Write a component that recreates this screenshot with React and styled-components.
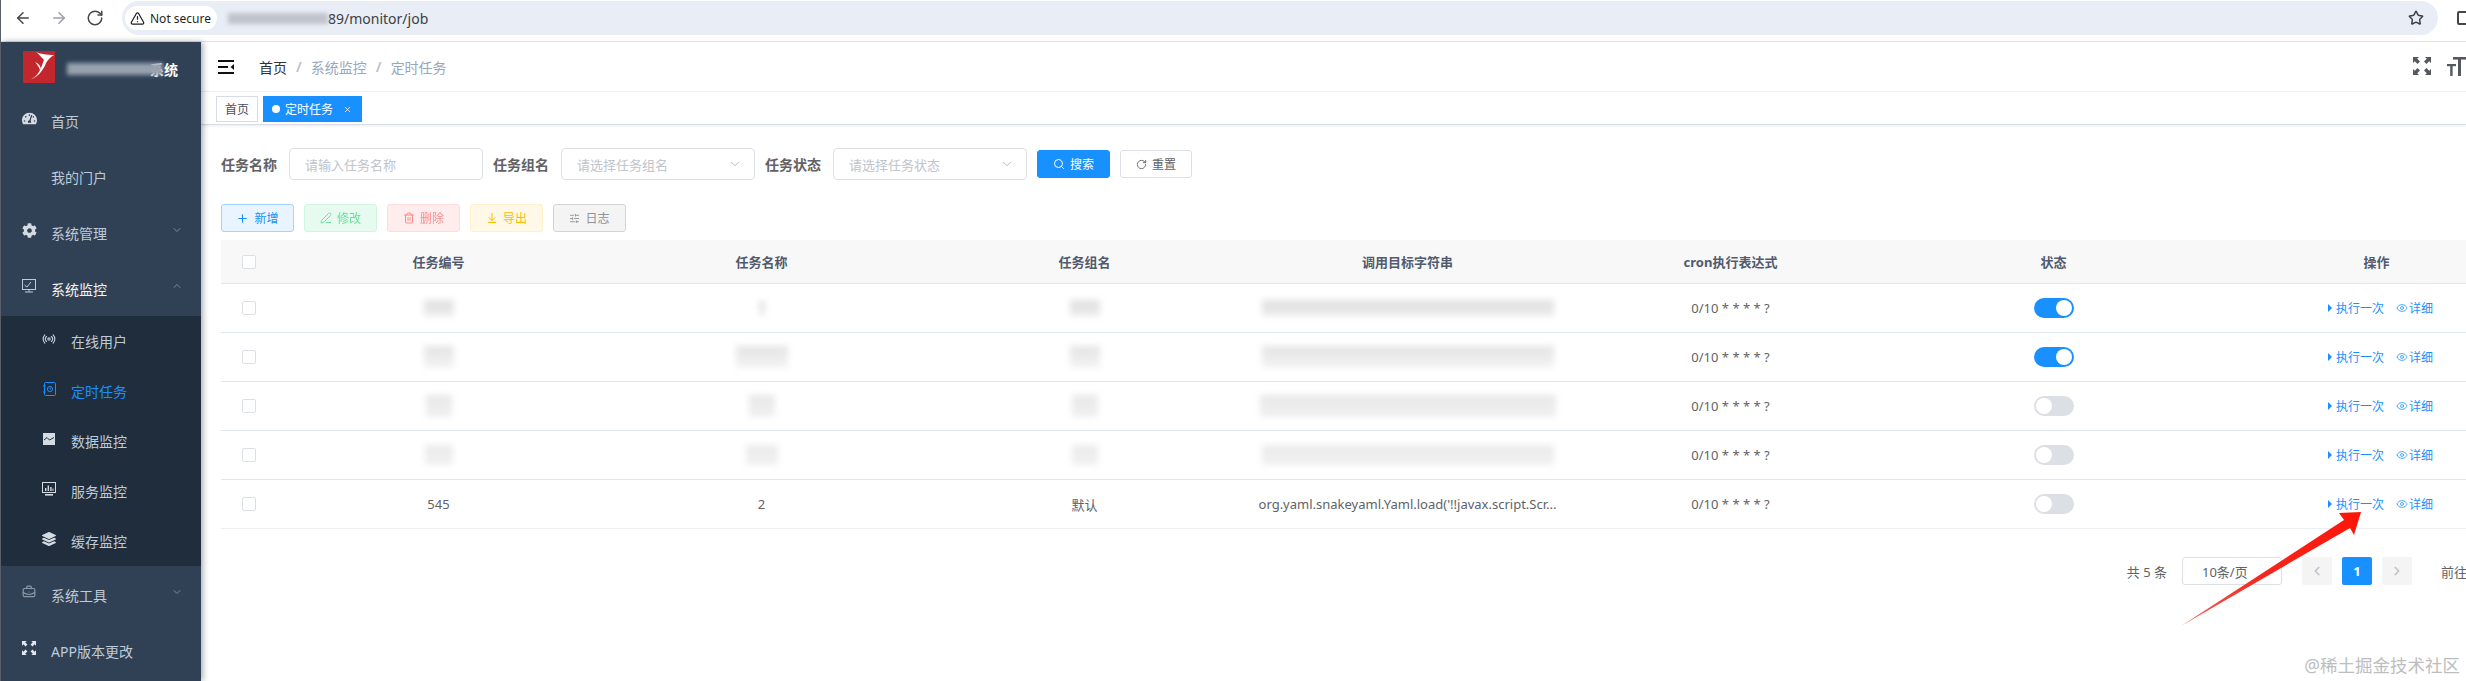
import React from 'react'
import styled, { createGlobalStyle } from 'styled-components'
import { ArrowLeft, ArrowRight, RotateCw, TriangleAlert, Star, Plus, Search, PenLine, Trash2, ArrowDownToLine, SlidersHorizontal, ChevronDown, ChevronUp, ChevronLeft, ChevronRight, Eye, Radio, BriefcaseBusiness, X } from 'lucide-react'
import { FaTachometerAlt, FaCog, FaLayerGroup } from 'react-icons/fa'

const GlobalStyle = createGlobalStyle`
  html, body {
    margin: 0;
    padding: 0;
    overflow: hidden;
    background: #fff;
  }
  * { box-sizing: border-box; }
`

const Page = styled.div`
  position: relative;
  width: 2466px;
  height: 681px;
  overflow: hidden;
  display: flex;
  flex-direction: column;
  border-left: 1px solid #5a5f6a;
  font-family: "Noto Sans", "Noto Sans CJK SC", sans-serif;
  color: #606266;
`

// browser chrome
const BrowserBar = styled.div`
  flex: none;
  height: 42px;
  display: flex;
  padding-top: 1px;
  border-bottom: 1px solid #dfe1e5;
  background: #fff;
`
const NavIcons = styled.div`
  flex: none;
  width: 121px;
  height: 34px;
  display: flex;
  align-items: center;
  gap: 18px;
  padding-left: 13px;
  color: #444746;
`
const AddressPill = styled.div`
  flex: none;
  width: 2316px;
  height: 34px;
  display: flex;
  align-items: center;
  padding: 0 14px 0 3px;
  border-radius: 17px;
  background: #e9edf6;
`
const SecureChip = styled.div`
  width: 92px;
  height: 24px;
  display: flex;
  align-items: center;
  gap: 5px;
  padding-left: 5px;
  border-radius: 12px;
  background: #fff;
  color: #1f1f1f;
  font-size: 12px;
`
const Url = styled.div`
  flex: 1;
  display: flex;
  align-items: center;
  padding-left: 11px;
  color: #3c4043;
  font-size: 14px;
`
const TabBox = styled.div`
  flex: none;
  width: 16px;
  height: 14px;
  margin: 10px 0 0 19px;
  border: 2px solid #444746;
  border-radius: 2px;
`

// mosaic that hides data in the shot
const Blur = styled.span`
  display: inline-block;
  width: ${p => p.$w}px;
  height: ${p => p.$h}px;
  background: ${p => p.$color || '#dcdcdc'};
  filter: blur(${p => p.$blur || 3}px);
`

const Body = styled.div`
  flex: 1;
  min-height: 0;
  display: flex;
`

// sidebar
const Sidebar = styled.aside`
  flex: none;
  width: 200px;
  background: #304156;
  box-shadow: 2px 0 6px rgba(0, 21, 41, 0.35);
  z-index: 2;
`
const Brand = styled.div`
  position: relative;
  height: 50px;
  display: flex;
  align-items: center;
  padding-left: 22px;
  gap: 11px;
`
const BrandName = styled.div`
  position: relative;
  width: 112px;
  padding-top: 4px;
  text-align: right;
  color: #fff;
  font-size: 14px;
  font-weight: 700;
`
const BrandCover = styled(Blur)`
  position: absolute;
  left: 1px;
  top: 8px;
`
const MenuRow = styled.div`
  height: 56px;
  display: flex;
  align-items: center;
  padding-left: 20px;
  color: ${p => (p.$open ? '#f4f4f5' : '#bfcbd9')};
  font-size: 14px;
`
const MenuIcon = styled.span`
  width: 16px;
  margin-right: 14px;
  display: flex;
  align-items: center;
  justify-content: center;
  margin-top: -4px;
`
const MenuLabel = styled.span`
  flex: 1;
  padding-top: 1px;
`
const MenuChevron = styled.span`
  display: flex;
  margin-right: 18px;
  margin-top: -4px;
  color: #7d8a9b;
`
const SubMenu = styled.div`
  background: #1f2d3d;
`
const SubRow = styled.div`
  height: 50px;
  display: flex;
  align-items: center;
  padding-left: 40px;
  color: ${p => (p.$active ? '#1890ff' : '#bfcbd9')};
  font-size: 14px;
`

// right side
const Main = styled.main`
  flex: 1;
  min-width: 0;
  overflow: hidden;
`
const Navbar = styled.div`
  height: 50px;
  display: flex;
  align-items: center;
  padding-left: 17px;
  border-bottom: 1px solid #f2f3f5;
`
const Hamburger = styled.span`
  display: flex;
  margin-right: 25px;
`
const Crumb = styled.span`
  font-size: 14px;
  color: ${p => (p.$home ? '#303133' : '#97a8be')};
`
const CrumbSep = styled.span`
  margin: 0 9px;
  color: #c0c4cc;
  font-size: 14px;
  font-weight: 700;
`
const NavTools = styled.div`
  margin-left: auto;
  display: flex;
  gap: 16px;
  color: #55585e;
`
const TagsBar = styled.div`
  height: 33px;
  display: flex;
  align-items: center;
  gap: 5px;
  padding: 2px 0 0 15px;
  border-bottom: 1px solid #d8dce5;
  box-shadow: 0 1px 3px rgba(0, 0, 0, 0.08);
`
const Tag = styled.div`
  height: 26px;
  display: flex;
  align-items: center;
  padding: 0 ${p => (p.$active ? 9 : 8)}px 0 8px;
  border: 1px solid ${p => (p.$active ? '#1890ff' : '#d8dce5')};
  background: ${p => (p.$active ? '#1890ff' : '#fff')};
  color: ${p => (p.$active ? '#fff' : '#495060')};
  font-size: 12px;
`
const TagDot = styled.span`
  width: 8px;
  height: 8px;
  margin-right: 5px;
  border-radius: 50%;
  background: #fff;
`
const TagClose = styled.span`
  display: flex;
  margin-left: 10px;
`
const Content = styled.div`
  width: 2337px;
  padding: 23px 0 0 20px;
`
const SearchForm = styled.div`
  height: 32px;
  display: flex;
  align-items: center;
`
const FieldLabel = styled.label`
  width: 68px;
  flex: none;
  color: #606266;
  font-size: 14px;
  font-weight: 700;
`
const FieldBox = styled.div`
  width: 194px;
  height: 32px;
  display: flex;
  align-items: center;
  justify-content: space-between;
  margin-right: 10px;
  padding: 0 12px 0 15px;
  border: 1px solid #dcdfe6;
  border-radius: 4px;
  color: #c0c4cc;
  font-size: 13px;
`
const SelectArrow = styled(ChevronDown)`
  color: #a8abb2;
`
const Button = styled.button`
  width: ${p => p.$w || 73}px;
  height: 28px;
  display: flex;
  align-items: center;
  justify-content: center;
  gap: 5px;
  margin-left: ${p => p.$gapLeft || 0}px;
  padding: 0;
  border: 1px solid ${p => p.$border};
  border-radius: 3px;
  background: ${p => p.$bg};
  color: ${p => p.$color};
  font-family: inherit;
  font-size: 12px;
`
const ButtonText = styled.span`
  display: flex;
  opacity: ${p => (p.$faded ? 0.6 : 1)};
`
const Toolbar = styled.div`
  display: flex;
  gap: 10px;
  margin-top: 24px;
`
const Table = styled.div`
  margin-top: 8px;
`
const Row = styled.div`
  display: grid;
  grid-template-columns: 56px repeat(7, 323px);
  height: ${p => (p.$head ? 44 : 49)}px;
  align-items: center;
  border-bottom: 1px solid ${p => (p.$last ? '#ebeef5' : '#dfe6ec')};
  background: ${p => (p.$head ? '#f8f8f9' : '#fff')};
  color: ${p => (p.$head ? '#515a6e' : '#606266')};
  font-size: 13px;
  font-weight: ${p => (p.$head ? 700 : 400)};
`
const Cell = styled.div`
  min-width: 0;
  padding: 0 6px;
  text-align: center;
  white-space: nowrap;
`
const BlurCell = styled(Cell)`
  display: flex;
  align-items: center;
  justify-content: center;
  height: 32px;
`
const Check = styled.span`
  display: block;
  width: 14px;
  height: 14px;
  margin-left: 21px;
  border: 1px solid #dcdfe6;
  border-radius: 2px;
  background: #fff;
`
const Switch = styled.span`
  position: relative;
  display: inline-block;
  width: 40px;
  height: 20px;
  margin-top: 4px;
  border-radius: 10px;
  background: ${p => (p.$on ? '#1890ff' : '#dcdfe6')};
  &::after {
    content: "";
    position: absolute;
    top: 2px;
    left: ${p => (p.$on ? 22 : 2)}px;
    width: 16px;
    height: 16px;
    border-radius: 50%;
    background: #fff;
  }
`
const Actions = styled.div`
  display: flex;
  align-items: center;
  justify-content: center;
  gap: 12px;
  padding-left: 8px;
  color: #1890ff;
  font-size: 12px;
`
const ActionLink = styled.span`
  display: flex;
  align-items: center;
  gap: 1px;
`
const Caret = styled.span`
  width: 0;
  height: 0;
  margin-right: 3px;
  border-style: solid;
  border-width: 4px 0 4px 4px;
  border-color: transparent transparent transparent #1890ff;
`
const Pagination = styled.div`
  display: flex;
  justify-content: flex-end;
  align-items: center;
  height: 28px;
  margin-top: 28px;
  padding-right: 71px;
  color: #606266;
  font-size: 13px;
`
const PageTotal = styled.span`
  margin-right: 15px;
`
const SizeBox = styled.div`
  width: 100px;
  height: 28px;
  display: flex;
  align-items: center;
  margin-right: 20px;
  padding-left: 19px;
  border: 1px solid #dcdfe6;
  border-radius: 3px;
`
const PageBtn = styled.div`
  width: 30px;
  height: 28px;
  display: flex;
  align-items: center;
  justify-content: center;
  margin-right: 10px;
  border-radius: 2px;
  background: ${p => (p.$active ? '#1890ff' : '#f4f4f5')};
  color: ${p => (p.$active ? '#fff' : '#c0c4cc')};
  font-weight: 700;
`
const JumpText = styled.span`
  margin-left: 19px;
`
const RedArrow = styled.svg`
  position: absolute;
  left: 2170px;
  top: 505px;
  z-index: 5;
`
const Watermark = styled.div`
  position: absolute;
  right: 6px;
  bottom: 5px;
  color: #bdbdbd;
  font-size: 17.5px;
  line-height: 22px;
  z-index: 5;
`

const Logo = () => (
  <svg width="32" height="32" viewBox="0 0 32 32">
    <rect width="32" height="32" rx="1" fill="#c1272d" />
    <path d="M1 31 C9 29 14 25 17 19 C19 15 20 11 21 9 C18 6 16 3 13 1 C17 3 24 4 31 4 C27 6 25 9 23 12 C21 18 15 28 1 31 Z" fill="#fff" />
    <path d="M12 11 C15 12 17 14 18 18 L17 19 C16 16 14 13 12 11 Z" fill="#fff" />
  </svg>
)

const HamburgerIcon = () => (
  <svg width="16" height="14" viewBox="0 0 16 14" fill="#111">
    <rect y="0" width="16" height="2" />
    <rect y="6" width="10" height="2" />
    <rect y="12" width="16" height="2" />
    <path d="M16 4 L12.5 7 L16 10 Z" />
  </svg>
)

const ExpandIcon = ({ size = 18, color = 'currentColor' }) => (
  <svg width={size} height={size} viewBox="0 0 18 18" fill={color}>
    <path d="M0 0h6L4.2 1.8 7 4.6 4.6 7 1.8 4.2 0 6z" />
    <path d="M18 0h-6l1.8 1.8L11 4.6 13.4 7l2.8-2.8L18 6z" />
    <path d="M0 18h6l-1.8-1.8L7 13.4 4.6 11l-2.8 2.8L0 12z" />
    <path d="M18 18h-6l1.8-1.8-2.8-2.8 2.4-2.4 2.8 2.8L18 12z" />
  </svg>
)

const FontSizeIcon = () => (
  <svg width="19" height="19" viewBox="0 0 19 19" fill="currentColor">
    <rect x="6" y="0" width="13" height="2.6" />
    <rect x="11" y="0" width="3" height="19" />
    <rect x="0" y="7" width="9" height="2.2" />
    <rect x="3.2" y="7" width="2.4" height="12" />
  </svg>
)

const MonitorChart = () => (
  <svg width="14" height="14" viewBox="0 0 14 14" fill="none" stroke="#bfcbd9" strokeWidth="1">
    <rect x="0.5" y="0.5" width="13" height="10" />
    <path d="M2.5 6 L5 8 L9 3" />
    <path d="M7 10.5 V12.5 M3 13 H11" />
  </svg>
)

const JobIcon = () => (
  <svg width="13" height="14" viewBox="0 0 13 14" fill="none" stroke="#1890ff" strokeWidth="1">
    <rect x="1.5" y="0.5" width="11" height="13" rx="1" />
    <circle cx="7" cy="7" r="2.6" />
    <path d="M7 5.5 V7 H8.2 M0 4 H2.5 M0 10 H2.5" />
  </svg>
)

const DataIcon = () => (
  <svg width="12" height="12" viewBox="0 0 12 12">
    <rect width="12" height="12" fill="#d5dbe3" />
    <path d="M1 7 L4 4.5 L6.5 7 L11 4.5" fill="none" stroke="#1f2d3d" strokeWidth="1" />
  </svg>
)

const ServerIcon = () => (
  <svg width="14" height="14" viewBox="0 0 14 14">
    <rect x="0.5" y="0.5" width="13" height="10" fill="none" stroke="#d5dbe3" />
    <path d="M3 9h1.4V6H3zM5.6 9H7V3.5H5.6zM8.2 9h1.4V5H8.2zM10.5 9h1V6.5h-1z" fill="#d5dbe3" />
    <rect x="3" y="12" width="8" height="1.6" fill="#d5dbe3" />
  </svg>
)

const blurTone = [
  'linear-gradient(#e0e0e0, #ebebeb)',
  'linear-gradient(#e3e3e3, #f4f4f4)',
  'linear-gradient(#e8e8e8, #f0f0f0)',
  'linear-gradient(#ebebeb, #f0f0f0)',
]

// hidden cells: [id, name, group, target] as [width, height]
const hiddenRows = [
  { on: true, cells: [[30, 16], [6, 14], [30, 16], [292, 16]] },
  { on: true, cells: [[30, 22], [52, 22], [30, 22], [292, 22]] },
  { on: false, cells: [[26, 22], [26, 22], [26, 22], [296, 22]] },
  { on: false, cells: [[28, 20], [32, 20], [26, 20], [292, 20]] },
]

const columns = ['任务编号', '任务名称', '任务组名', '调用目标字符串', 'cron执行表达式', '状态', '操作']

const RowActions = () => (
  <Actions>
    <ActionLink><Caret />执行一次</ActionLink>
    <ActionLink><Eye size={12} strokeWidth={1.5} />详细</ActionLink>
  </Actions>
)

export default function App() {
  return (
    <>
      <GlobalStyle />
      <Page>
        <BrowserBar>
          <NavIcons>
            <ArrowLeft size={18} />
            <ArrowRight size={18} color="#9aa0a6" />
            <RotateCw size={18} />
          </NavIcons>
          <AddressPill>
            <SecureChip>
              <TriangleAlert size={15} />
              Not secure
            </SecureChip>
            <Url>
              <Blur $w={100} $h={11} $color="#bfc3cb" $blur={2} />
              89/monitor/job
            </Url>
            <Star size={16} color="#3c4043" strokeWidth={2.2} />
          </AddressPill>
          <TabBox />
        </BrowserBar>

        <Body>
          <Sidebar>
            <Brand>
              <Logo />
              <BrandName>
                <BrandCover $w={96} $h={12} $color="#98a2af" $blur={2} />
                系统
              </BrandName>
            </Brand>
            <MenuRow>
              <MenuIcon><FaTachometerAlt size={15} color="#d5dbe3" /></MenuIcon>
              <MenuLabel>首页</MenuLabel>
            </MenuRow>
            <MenuRow>
              <MenuIcon />
              <MenuLabel>我的门户</MenuLabel>
            </MenuRow>
            <MenuRow>
              <MenuIcon><FaCog size={15} color="#d5dbe3" /></MenuIcon>
              <MenuLabel>系统管理</MenuLabel>
              <MenuChevron><ChevronDown size={12} /></MenuChevron>
            </MenuRow>
            <MenuRow $open>
              <MenuIcon><MonitorChart /></MenuIcon>
              <MenuLabel>系统监控</MenuLabel>
              <MenuChevron><ChevronUp size={12} /></MenuChevron>
            </MenuRow>
            <SubMenu>
              <SubRow>
                <MenuIcon><Radio size={14} color="#bfcbd9" /></MenuIcon>
                在线用户
              </SubRow>
              <SubRow $active>
                <MenuIcon><JobIcon /></MenuIcon>
                定时任务
              </SubRow>
              <SubRow>
                <MenuIcon><DataIcon /></MenuIcon>
                数据监控
              </SubRow>
              <SubRow>
                <MenuIcon><ServerIcon /></MenuIcon>
                服务监控
              </SubRow>
              <SubRow>
                <MenuIcon><FaLayerGroup size={14} color="#d5dbe3" /></MenuIcon>
                缓存监控
              </SubRow>
            </SubMenu>
            <MenuRow>
              <MenuIcon><BriefcaseBusiness size={14} color="#8d99a8" /></MenuIcon>
              <MenuLabel>系统工具</MenuLabel>
              <MenuChevron><ChevronDown size={12} /></MenuChevron>
            </MenuRow>
            <MenuRow>
              <MenuIcon><ExpandIcon size={14} color="#e4e8ee" /></MenuIcon>
              <MenuLabel>APP版本更改</MenuLabel>
            </MenuRow>
          </Sidebar>

          <Main>
            <Navbar>
              <Hamburger><HamburgerIcon /></Hamburger>
              <Crumb $home>首页</Crumb>
              <CrumbSep>/</CrumbSep>
              <Crumb>系统监控</Crumb>
              <CrumbSep>/</CrumbSep>
              <Crumb>定时任务</Crumb>
              <NavTools>
                <ExpandIcon />
                <FontSizeIcon />
              </NavTools>
            </Navbar>
            <TagsBar>
              <Tag>首页</Tag>
              <Tag $active>
                <TagDot />
                定时任务
                <TagClose><X size={9} /></TagClose>
              </Tag>
            </TagsBar>

            <Content>
              <SearchForm>
                <FieldLabel>任务名称</FieldLabel>
                <FieldBox>请输入任务名称</FieldBox>
                <FieldLabel>任务组名</FieldLabel>
                <FieldBox>
                  请选择任务组名
                  <SelectArrow size={14} strokeWidth={1.5} />
                </FieldBox>
                <FieldLabel>任务状态</FieldLabel>
                <FieldBox>
                  请选择任务状态
                  <SelectArrow size={14} strokeWidth={1.5} />
                </FieldBox>
                <Button $bg="#1890ff" $border="#1890ff" $color="#fff">
                  <Search size={12} />搜索
                </Button>
                <Button $bg="#fff" $border="#dcdfe6" $color="#606266" $w={72} $gapLeft={10}>
                  <RotateCw size={11} />重置
                </Button>
              </SearchForm>

              <Toolbar>
                <Button $bg="#e8f4ff" $border="#a3d3ff" $color="#1890ff"><Plus size={13} />新增</Button>
                <Button $bg="#e7faf0" $border="#d0f5e0" $color="#13ce66">
                  <ButtonText $faded><PenLine size={12} /></ButtonText>
                  <ButtonText $faded>修改</ButtonText>
                </Button>
                <Button $bg="#ffeded" $border="#ffdbdb" $color="#ff4949">
                  <ButtonText $faded><Trash2 size={12} /></ButtonText>
                  <ButtonText $faded>删除</ButtonText>
                </Button>
                <Button $bg="#fff8e6" $border="#fff1cc" $color="#ffba00"><ArrowDownToLine size={12} />导出</Button>
                <Button $bg="#f4f4f5" $border="#d3d4d6" $color="#909399">
                  <SlidersHorizontal size={11} />日志
                </Button>
              </Toolbar>

              <Table>
                <Row $head>
                  <Check />
                  {columns.map(c => <Cell key={c}>{c}</Cell>)}
                </Row>
                {hiddenRows.map((row, i) => (
                  <Row key={i}>
                    <Check />
                    {row.cells.map(([w, h], j) => (
                      <BlurCell key={j}><Blur $w={w} $h={h} $color={blurTone[i]} /></BlurCell>
                    ))}
                    <Cell>0/10 * * * * ?</Cell>
                    <Cell><Switch $on={row.on} /></Cell>
                    <Cell><RowActions /></Cell>
                  </Row>
                ))}
                <Row $last>
                  <Check />
                  <Cell>545</Cell>
                  <Cell>2</Cell>
                  <Cell>默认</Cell>
                  <Cell>org.yaml.snakeyaml.Yaml.load('!!javax.script.Scr...</Cell>
                  <Cell>0/10 * * * * ?</Cell>
                  <Cell><Switch /></Cell>
                  <Cell><RowActions /></Cell>
                </Row>
              </Table>

              <Pagination>
                <PageTotal>共 5 条</PageTotal>
                <SizeBox>10条/页</SizeBox>
                <PageBtn><ChevronLeft size={14} strokeWidth={3} /></PageBtn>
                <PageBtn $active>1</PageBtn>
                <PageBtn><ChevronRight size={14} strokeWidth={3} /></PageBtn>
                <JumpText>前往</JumpText>
              </Pagination>
            </Content>
          </Main>
        </Body>

        <RedArrow width="200" height="130" viewBox="2170 505 200 130">
          <defs>
            <linearGradient id="arrowFill" x1="0" y1="1" x2="1" y2="0">
              <stop offset="0" stopColor="#f0605a" />
              <stop offset="0.45" stopColor="#f5261c" />
              <stop offset="1" stopColor="#ff1408" />
            </linearGradient>
          </defs>
          <polygon points="2180,626 2343,520 2338,513 2360,512 2353,535 2349,528" fill="url(#arrowFill)" />
        </RedArrow>
        <Watermark>@稀土掘金技术社区</Watermark>
      </Page>
    </>
  )
}
